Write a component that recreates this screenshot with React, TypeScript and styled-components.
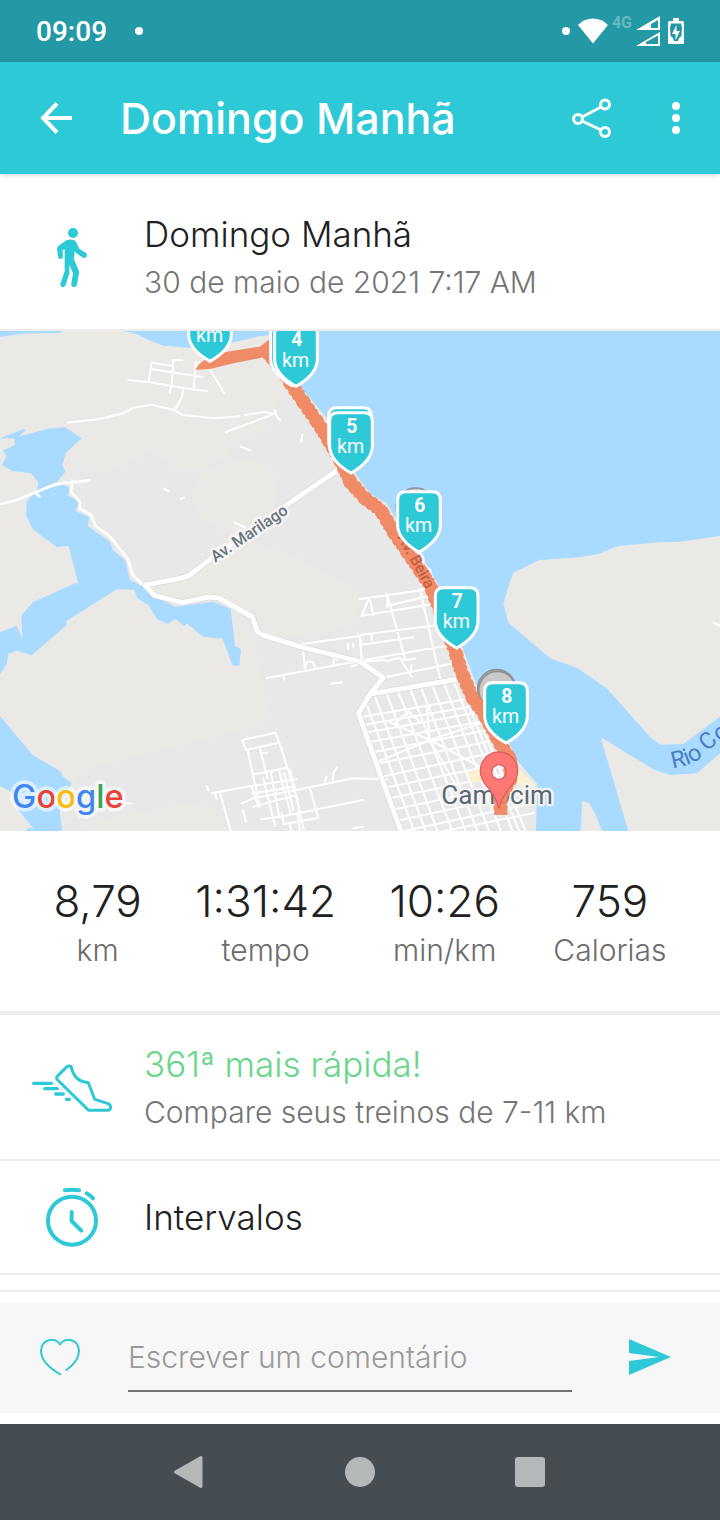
import React from "react";
import styled, { createGlobalStyle } from "styled-components";

const teal = "#2ec9d7";

const GlobalStyle = createGlobalStyle`
  * { box-sizing: border-box; }
  body { margin: 0; background: #fff; font-family: Inter, "Liberation Sans", sans-serif; }
  button { border: 0; padding: 0; background: none; cursor: pointer; }
  svg { display: block; }
  h1, h2, p, dl, dt, dd { margin: 0; font-weight: inherit; }
`;

const Screen = styled.div`
  min-height: 100vh;
  display: flex;
  flex-direction: column;
`;

const StatusBar = styled.div`
  height: 62px;
  padding: 0 36px;
  display: flex;
  align-items: center;
  justify-content: space-between;
  background: #2499a6;
  color: #fff;
  font-family: Roboto, sans-serif;
`;

const StatusGroup = styled.div<{ $gap: number }>`
  display: flex;
  align-items: center;
  gap: ${(p) => p.$gap}px;
`;

const Clock = styled.time`
  padding-top: 2px;
  font-size: 28px;
  line-height: 32px;
  font-weight: 500;
`;

const Dot = styled.span`
  width: 8px;
  height: 8px;
  border-radius: 50%;
  background: #fff;
`;

const Network = styled.span`
  font-size: 16px;
  line-height: 20px;
  font-weight: 700;
  opacity: 0.3;
  padding-bottom: 16px;
`;

const AppBar = styled.header`
  height: 112px;
  padding-left: 16px;
  display: flex;
  align-items: center;
  background: ${teal};
  color: #fff;
  box-shadow: 0 1px 5px rgba(0, 0, 0, 0.18);
  position: relative;
`;

const BarButton = styled.button<{ $width: number }>`
  width: ${(p) => p.$width}px;
  height: 96px;
  display: grid;
  place-items: center;
  flex: none;
`;

const Title = styled.h1`
  flex: 1;
  padding-left: 24px;
  font-size: 43px;
  line-height: 56px;
  font-weight: 500;
  white-space: nowrap;
`;

const Row = styled.section<{ $top: number; $bottom: number }>`
  display: grid;
  grid-template-columns: 144px 1fr;
  align-items: center;
  padding: ${(p) => p.$top}px 0 ${(p) => p.$bottom}px;
  border-bottom: 2px solid #ededed;
`;

const RowIcon = styled.div`
  display: grid;
  place-items: center;
`;

const RowTitle = styled.h2<{ $color?: string }>`
  font-size: 35px;
  line-height: 48px;
  font-weight: 300;
  color: ${(p) => p.$color ?? "#212121"};
`;

const RowText = styled.p`
  font-size: 30px;
  line-height: 48px;
  font-weight: 300;
  color: #757575;
`;

const MapFrame = styled.div`
  svg { width: 100%; height: auto; }
`;

const Stats = styled.dl`
  display: flex;
  justify-content: space-evenly;
  padding: 41px 0;
  border-bottom: 4px solid #ededed;
`;

const Stat = styled.div`
  display: flex;
  flex-direction: column-reverse;
  text-align: center;
`;

const StatValue = styled.dd`
  font-size: 44px;
  line-height: 58px;
  font-weight: 300;
  color: #212121;
`;

const StatLabel = styled.dt`
  font-size: 30px;
  line-height: 40px;
  font-weight: 300;
  color: #6c6c6c;
`;

const NextCard = styled.div`
  height: 17px;
  border-bottom: 2px solid #ededed;
`;

const CommentBar = styled.form`
  margin: 11px 0;
  padding: 19px 0 21px;
  display: flex;
  gap: 8px;
  background: #f7f7f7;
`;

const CommentButton = styled.button<{ $width: number }>`
  width: ${(p) => p.$width}px;
  flex: none;
  display: grid;
  place-items: center;
`;

const CommentInput = styled.input`
  flex: 1;
  min-width: 0;
  height: 70px;
  padding: 2px 0 0;
  border: 0;
  border-bottom: 2px solid #737373;
  background: none;
  outline: 0;
  font: 300 30px Inter, "Liberation Sans", sans-serif;
  color: #212121;
  &::placeholder { color: #9a9a9a; opacity: 1; }
`;

const NavBar = styled.nav`
  margin-top: auto;
  height: 96px;
  display: flex;
  justify-content: center;
  gap: 80px;
  background: #454c52;
`;

const NavButton = styled.button`
  width: 90px;
  display: grid;
  place-items: center;
`;

function Marker({ x, y, km }: { x: number; y: number; km?: string }) {
  return (
    <g transform={`translate(${x} ${y})`}>
      <path
        d="M-64 30Q-64 5-40 5H40Q64 5 64 30V104C64 140 30 169 0 186C-30 169-64 140-64 104Z"
        fill={teal}
        stroke="#fff"
        strokeWidth="9"
      />
      <g fill="#fff" textAnchor="middle" fontFamily="Roboto, sans-serif">
        {km && (
          <text x="2" y="66" fontSize="58" fontWeight="700">
            {km}
          </text>
        )}
        {km !== undefined && (
          <text x="-1" y="127" fontSize="59">
            km
          </text>
        )}
      </g>
    </g>
  );
}

const route =
  "M800 64L840 112L892 190L958 285L1018 385L1052 458L1095 505L1142 540L1180 605L1232 680L1292 768L1366 965L1384 1025L1418 1105L1448 1145L1500 1240L1532 1290L1530 1350L1502 1400V1454";

function RouteMap() {
  return (
    <svg viewBox="0 3 2160 1500" role="img" aria-label="Mapa do percurso">
      <defs>
        <clipPath id="town">
          <path d="M1080 1140L1110 1095L1385 1045L1440 1160L1530 1300L1605 1380V1503H1208Z" />
        </clipPath>
        <path id="river" d="M2018 1315Q2090 1305 2124 1264Q2160 1225 2240 1192" />
      </defs>
      <rect y="3" width="2160" height="1500" fill="#ebe9e5" />
      {/* built-up area */}
      <g fill="#e8e8e8">
        <path d="M215 435L240 400L300 430L345 418L450 365L520 410L600 410L690 380L680 350L800 290L850 180L1100 500L1350 900L1620 1400V1503H690L650 1440L560 1420L400 1450L200 1500L190 1420L240 1320L560 1240L770 1190Q805 1170 803 1140L760 930L692 840L400 750L280 590Z" />
      </g>
      <g fill="#ebe9e5">
        <path d="M690 398Q790 370 826 455Q840 540 780 595Q730 640 660 595Q590 570 575 500Q580 420 690 398Z" />
        <path d="M560 730L750 635L860 668L1000 740Q1100 790 1070 845Q1060 895 980 905L790 930L755 860L650 795L480 800L430 765Z" />
      </g>
      {/* sea and river */}
      <path
        fill="#a9daff"
        d="M0 3V20L70 11L180 8L190 3H370L410 12L450 32L490 47L570 53L690 40L780 18L830 14L905 175L985 270L1030 375L1080 450L1110 490L1160 520L1190 570L1260 670L1330 790L1390 960L1430 1065L1510 1200L1552 1292L1612 1362L1608 1503H1742L1747 1412L1768 1420L1785 1450L1806 1503H1885L1840 1350L1810 1250L1803 1222L1960 1318L2010 1335L2090 1330L2160 1270V1160L2050 1242L1980 1244L1950 1220L1820 1075L1730 1013L1650 985L1525 878L1510 820L1530 755L1540 728L1618 690L1740 682L1795 672L1855 648L1980 637L2040 635L2160 618V3Z"
      />
      {/* lagoons */}
      <g fill="#a9daff">
        <path d="M0 325L70 298L78 300L55 320L150 295L195 292L245 325L198 368L187 405L196 425L168 460L110 487L115 455L92 430L35 422L5 405L20 378L8 362L45 345L42 325Z" />
        <path d="M100 490L190 463L208 473L205 497L240 515L227 543L268 562L263 588L330 635L338 660L375 690L390 750L420 765L460 797L525 830L640 815L692 837L705 948L723 958L718 1008L697 1006L668 926L610 921L560 880L553 888L525 867L502 882L472 868L445 825L412 805L403 780L350 778L200 872V885L95 976L50 962L25 972L20 1003L0 1032V907L50 888L67 925L64 857L98 817L227 759L237 766L232 750L206 648L170 651L98 598L78 555L80 515Z" />
        <path d="M0 1158L98 1275L183 1325L187 1338L215 1360L178 1430L186 1503H75L90 1492L102 1498L55 1440L40 1390L0 1368Z" />
      </g>
      {/* minor streets */}
      <g fill="none" stroke="#fff" strokeWidth="6" strokeLinecap="round" strokeLinejoin="round">
        <path d="M385 150L450 157L550 174L622 184M455 98L445 157M455 98L519 108V90L547 91M519 108L515 165L509 188M457 118L606 141M588 98L581 172M588 98H618L672 188M550 174L546 200L525 240M203 278L300 267L370 250L400 233L453 224L525 241L548 255L645 265L718 259M735 255L793 246L822 252L678 306M824 241L828 255L840 271M907 314L903 337M722 350L751 361M491 476L505 483M542 507L553 503M704 578L735 593" />
        <path d="M0 523L50 510L165 463L268 451M108 490L118 499M218 453L213 485L240 517L238 535L273 555L287 588L330 620L384 688L398 735L430 765" strokeWidth="8" />
        <path d="M800 1044L1040 1000L1150 990M850 1037L853 1049M910 965L915 1020L918 1000L924 995H938L945 1010M905 942L1080 918L1085 1000M1000 1003L1002 985L1012 990M1043 942L1045 957M1060 940V950M993 1061L1025 1057M1055 1010L1075 1002" />
        <path d="M727 1230L826 1208L838 1238L738 1260ZM743 1262L780 1430M838 1238L893 1410M780 1258L803 1345M785 1270L802 1268M765 1333L862 1313M635 1390L740 1370L890 1348M758 1390L885 1370M725 1420L760 1405L890 1380L1060 1345L1160 1348M784 1468L840 1460L1090 1410M760 1430L890 1395M850 1483L950 1465M812 1325L838 1460M838 1325L872 1450M853 1330L880 1440M870 1320L912 1500M790 1345L825 1488M755 1370L775 1430M930 1375L955 1465M845 1450L852 1483M870 1485L875 1503M893 1450L900 1503M645 1390L650 1406M660 1390L692 1503M620 1368L625 1380M730 1440L737 1475M975 1355L980 1340M998 1350L1000 1330L1010 1312M375 1420H392M1060 1495L1090 1490" />
        <path d="M1080 807L1340 770M1160 828L1300 795M1085 857L1300 822M1080 915L1310 885M1080 945L1240 922M1080 992L1350 945M1155 1042L1360 1000M1160 790L1215 985M1165 795L1160 830M1105 810L1085 857M1110 810L1120 855M1260 778L1320 1045M1290 775L1320 880L1360 1000M1150 987L1158 993L1195 985M1200 985L1235 1040M1210 990L1245 986M1235 1005L1230 1030M1080 915L1085 985M1115 915V930" />
        <path d="M2140 878L2160 887" />
      </g>
      <g clipPath="url(#town)" fill="none" stroke="#fff" strokeWidth="6">
        <path d="M1060 1165L1500 1090M1060 1190L1500 1115M1060 1215L1500 1135M1060 1245L1500 1165M1060 1278L1540 1185M1060 1315L1540 1220M1100 1350L1560 1250M1100 1385L1580 1285M1120 1415L1600 1315M1130 1450L1620 1345M1130 1485L1620 1380M1180 1510L1620 1415M1300 1510L1620 1445" />
        <path d="M1095 1110L1245 1510M1125 1100L1280 1510M1160 1090L1315 1510M1195 1085L1360 1510M1230 1075L1400 1510M1262 1070L1435 1510M1295 1060L1470 1510M1330 1055L1505 1510M1360 1050L1540 1510M1400 1110L1560 1510M1450 1200L1580 1510" />
        <path d="M1165 1175L1290 1230L1440 1310M1290 1230L1120 1300M1290 1230L1500 1160M1180 1185L1225 1145L1260 1175M1290 1230L1280 1130M1290 1230L1370 1370" />
      </g>
      {/* main roads */}
      {[
        ["#d3d2cf", 18],
        ["#fff", 15],
      ].map(([color, width]) => (
        <path
          key={color}
          d="M1020 415L860 525L640 680L565 738L540 745L435 765L463 796L547 818L625 801L657 804L757 861L772 905L788 915L900 950L1080 995L1150 1043L1110 1092L1076 1150L1100 1220L1205 1510M1110 1092L1390 1045"
          fill="none"
          stroke={color}
          strokeWidth={width}
          strokeLinejoin="round"
        />
      ))}
      <path d="M1402 1330L1450 1312L1470 1350L1415 1360ZM1540 1295L1570 1330L1605 1365L1590 1385L1545 1360Z" fill="#faf0d0" />

      <g fontFamily="Roboto, sans-serif" stroke="#f5f5f5" strokeLinejoin="round" paintOrder="stroke">
        <text transform="translate(646 698) rotate(-34)" fontSize="48" fontWeight="500" fill="#6b747c" strokeWidth="16">
          Av. Marilago
        </text>
        <text transform="translate(1192 622) rotate(61)" fontSize="46" fontWeight="500" fill="#6b747c" strokeWidth="16">
          Av. Beira
        </text>
        <text x="1324" y="1422" fontSize="78" fill="#5a6872" strokeWidth="14">
          Camocim
        </text>
      </g>
      <text fontFamily="Roboto, sans-serif" fontSize="70" fill="#4c7cc4">
        <textPath href="#river">Rio Co</textPath>
      </text>

      <g fill="#c9c9c9" stroke="#8f9092" strokeWidth="5">
        <circle cx="1247" cy="532" r="58" />
        <circle cx="1490" cy="1076" r="57" />
        <circle cx="1492" cy="1080" r="56" />
      </g>

      {/* recorded track */}
      <g opacity="0.93" fill="none" stroke="#f1845f">
        <path d="M585 119L600 100L640 72L700 62L780 50L808 28V104L790 82L735 93L700 100L630 117Z" fill="#f1845f" stroke="none" />
        <path d={route} strokeWidth="37" />
        <path d={route} strokeWidth="42" strokeDasharray="14 6 8 13 19 9" />
      </g>
      <text transform="translate(1192 622) rotate(61)" fontFamily="Roboto, sans-serif" fontSize="46" fontWeight="500" fill="#c4603f">
        Av. Beira
      </text>

      <Marker x={630} y={-92} km="" />
      <Marker x={876} y={-19} />
      <Marker x={888} y={-17} km="4" />
      <Marker x={1050} y={228} />
      <Marker x={1053} y={243} km="5" />
      <Marker x={1257} y={480} km="6" />
      <Marker x={1370} y={768} km="7" />
      <Marker x={1518} y={1053} km="8" />

      <path
        fillRule="evenodd"
        fill="#ff7875"
        stroke="#dc5f5f"
        strokeWidth="4"
        d="M1497 1435Q1488 1400 1462 1370Q1441 1346 1441 1322A56 56 0 0 1 1553 1322Q1553 1346 1532 1370Q1506 1400 1497 1435ZM1497 1304A22 22 0 1 0 1497 1348A22 22 0 1 0 1497 1304Z"
      />

      <text
        x="36"
        y="1433"
        fontFamily="Inter, sans-serif"
        fontSize="98"
        fontWeight="500"
        stroke="#fff"
        strokeOpacity="0.6"
        strokeWidth="22"
        strokeLinejoin="round"
        paintOrder="stroke"
      >
        <tspan fill="#4285f4">G</tspan>
        <tspan fill="#ea4335">o</tspan>
        <tspan fill="#fbbc05">o</tspan>
        <tspan fill="#4285f4">g</tspan>
        <tspan fill="#34a853">l</tspan>
        <tspan fill="#ea4335">e</tspan>
      </text>
    </svg>
  );
}

const stats = [
  { value: "8,79", label: "km" },
  { value: "1:31:42", label: "tempo" },
  { value: "10:26", label: "min/km" },
  { value: "759", label: "Calorias" },
];

export default function App() {
  return (
    <Screen>
      <GlobalStyle />
      <StatusBar>
        <StatusGroup $gap={28}>
          <Clock>09:09</Clock>
          <Dot />
        </StatusGroup>
        <StatusGroup $gap={8}>
          <Dot />
          <StatusGroup $gap={4}>
            <svg width="30" height="26" viewBox="0 0 30 26" fill="#fff">
              <path d="M15 25.5L0 7Q6 .5 15 .5T30 7Z" />
            </svg>
            <Network>4G</Network>
            <svg width="24" height="30" viewBox="0 0 24 30" fill="#fff">
              <path fillRule="evenodd" d="M24 0V14H0ZM22 4L15 8V12H22Z" />
              <path fillRule="evenodd" d="M24 16V30H0ZM22 19.5L10 26V28H22Z" />
            </svg>
          </StatusGroup>
          <svg width="16" height="26" viewBox="0 0 16 26">
            <path d="M5 0H11V3H14.500Q16 3 16 4.500V24.500Q16 26 14.500 26H1.500Q0 26 0 24.500V4.500Q0 3 1.500 3H5Z" fill="#fff" />
            <path d="M3 5.500H13L14 9L13.500 18L11 20L10 23H6L5 20L2.500 18L2 9Z" fill="#2499a6" />
            <path d="M8.500 7V13H12L7.500 22V16H4Z" fill="#fff" />
          </svg>
        </StatusGroup>
      </StatusBar>

      <AppBar>
        <BarButton $width={80} aria-label="Voltar">
          <svg width="32" height="32" viewBox="0 0 32 32" fill="none" stroke="#fff" strokeWidth="4">
            <path d="M32 16H4M17 1.500L3 16L17 30.500" />
          </svg>
        </BarButton>
        <Title>Domingo Manhã</Title>
        <BarButton $width={80} aria-label="Compartilhar">
          <svg width="40" height="40" viewBox="0 0 40 40" fill="none" stroke="#fff" strokeWidth="3">
            <circle cx="6" cy="21" r="4.500" />
            <circle cx="33" cy="6.500" r="4.500" />
            <circle cx="33" cy="34" r="4.500" />
            <path d="M10 19L29 9M10 23L29 32" />
          </svg>
        </BarButton>
        <BarButton $width={88} aria-label="Mais opções">
          <svg width="8" height="32" viewBox="0 0 8 32" fill="#fff">
            <circle cx="4" cy="4" r="4" />
            <circle cx="4" cy="16" r="4" />
            <circle cx="4" cy="28" r="4" />
          </svg>
        </BarButton>
      </AppBar>

      <Row $top={36} $bottom={23}>
        <RowIcon>
          <svg width="30" height="60" viewBox="84 38 90 180" fill={teal}>
            <circle cx="132" cy="53" r="15" />
            <path d="M112 75Q124 70 136 75Q141 78 145 88L151 100L170 112Q177 119 171 126Q166 130 160 126L141 113L137 107L135 132L149 165L150 173L144 208Q141 217 133 215Q125 213 127 204L132 174L121 148V174L110 209Q107 217 99 215Q92 212 95 203L107 168V101L101 105L102 122Q101 131 94 131Q87 131 87 122L84 101Q84 94 91 90Z" />
          </svg>
        </RowIcon>
        <div>
          <RowTitle>Domingo Manhã</RowTitle>
          <RowText>30 de maio de 2021 7:17 AM</RowText>
        </div>
      </Row>

      <MapFrame>
        <RouteMap />
      </MapFrame>

      <Stats>
        {stats.map((s) => (
          <Stat key={s.label}>
            <StatLabel>{s.label}</StatLabel>
            <StatValue>{s.value}</StatValue>
          </Stat>
        ))}
      </Stats>

      <Row $top={25} $bottom={23}>
        <RowIcon>
          <svg width="80" height="48" viewBox="96 100 240 144" fill="none" stroke={teal} strokeWidth="9" strokeLinecap="round" strokeLinejoin="round">
            <path d="M171 138L201 108Q206 104 213 107Q222 148 254 154L265 156L284 206L325 219Q333 223 332 232Q330 239 321 239H266L173 148Q168 143 171 138Z" />
            <path d="M101 158H154M134 174H172M167 190H190M199 206H208" strokeWidth="10" />
          </svg>
        </RowIcon>
        <div>
          <RowTitle $color="#69d68a">361ª mais rápida!</RowTitle>
          <RowText>Compare seus treinos de 7-11 km</RowText>
        </div>
      </Row>

      <Row $top={26} $bottom={26}>
        <RowIcon>
          <svg width="52" height="60" viewBox="138 471 156 180" fill="none" stroke={teal} strokeWidth="12" strokeLinecap="round" strokeLinejoin="round">
            <circle cx="216" cy="572" r="72" />
            <path d="M215 546V573L244 602M195 481Q215 477 237 481M260 490Q271 496 279 505" />
          </svg>
        </RowIcon>
        <RowTitle>Intervalos</RowTitle>
      </Row>
      <NextCard />

      <CommentBar onSubmit={(e) => e.preventDefault()}>
        <CommentButton type="button" $width={120} aria-label="Curtir">
          <svg width="40" height="36" viewBox="60 59 120 108" fill="none" stroke={teal} strokeWidth="6" strokeLinecap="round" strokeLinejoin="round">
            <path d="M121 165C93 149 63 123 63 94C65 60 103 51 120 75C137 51 175 60 177 94C177 116 160 137 139 152" />
          </svg>
        </CommentButton>
        <CommentInput aria-label="Escrever um comentário" placeholder="Escrever um comentário" />
        <CommentButton type="submit" $width={140} aria-label="Enviar">
          <svg width="42" height="36" viewBox="0 0 42 36" fill={teal}>
            <path d="M0 0L42 18L0 36V22L30 18L0 14Z" />
          </svg>
        </CommentButton>
      </CommentBar>

      <NavBar aria-label="Sistema">
        <NavButton aria-label="Voltar">
          <svg width="32" height="34" viewBox="0 0 32 34" fill="#b4b8b9" stroke="#b4b8b9" strokeWidth="3" strokeLinejoin="round">
            <path d="M1.500 17L27 2.500V31.500Z" />
          </svg>
        </NavButton>
        <NavButton aria-label="Início">
          <svg width="30" height="30" viewBox="0 0 30 30" fill="#b4b8b9">
            <circle cx="15" cy="15" r="15" />
          </svg>
        </NavButton>
        <NavButton aria-label="Recentes">
          <svg width="30" height="30" viewBox="0 0 30 30" fill="#b4b8b9">
            <rect width="30" height="30" rx="3" />
          </svg>
        </NavButton>
      </NavBar>
    </Screen>
  );
}
